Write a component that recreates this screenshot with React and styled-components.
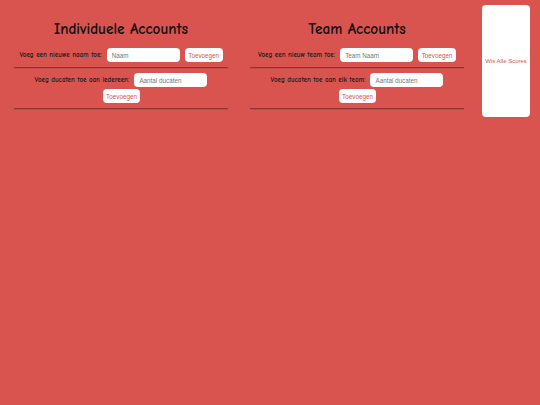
import React from "react";
import styled, { createGlobalStyle } from "styled-components";

const Global = createGlobalStyle`
  html, body { margin: 0; padding: 0; }
  body {
    background: #d9534f;
    font-family: "Comic Sans MS", "Comic Neue", "DejaVu Sans", sans-serif;
    width: 540px;
    height: 405px;
    overflow: hidden;
  }
`;

const Page = styled.div`
  display: flex;
  align-items: flex-start;
  padding: 5px 10px 0 14px;
`;

const Column = styled.section`
  width: 214px;
  display: flex;
  flex-direction: column;
  align-items: stretch;
  margin-right: ${(p) => p.$gap || 0}px;
`;

const Title = styled.h1`
  margin: 15px 0 10px;
  font-size: 15.2px;
  font-weight: bold;
  text-align: center;
  color: #111;
  line-height: 18px;
`;

const Row = styled.div`
  display: flex;
  flex-wrap: wrap;
  justify-content: center;
  align-items: center;
  column-gap: 4px;
  row-gap: 2px;
  padding: ${(p) => p.$pad};
`;

const Label = styled.label`
  font-size: 7px;
  font-weight: bold;
  color: #222;
  margin-right: 1px;
  line-height: 14px;
`;

const Input = styled.input`
  width: 73px;
  height: 14px;
  box-sizing: border-box;
  border: none;
  border-radius: 4px;
  background: #fff;
  padding: 0 5px;
  font-family: "Liberation Sans", Arial, sans-serif;
  font-size: 6.3px;
  outline: none;
  &::placeholder { color: #777; }
`;

const Button = styled.button`
  height: 14px;
  box-sizing: border-box;
  border: none;
  border-radius: 4px;
  background: #fff;
  color: #d9534f;
  font-family: "Liberation Sans", Arial, sans-serif;
  font-size: 6.3px;
  padding: 0 3.5px;
  margin-left: 1px;
  cursor: pointer;
`;

const Divider = styled.hr`
  margin: 0;
  border: none;
  border-top: 1px solid #8c3532;
  border-bottom: 1px solid #c24b47;
`;

const Side = styled.aside`
  width: 48px;
  margin-left: 18px;
`;

const SideButton = styled.button`
  width: 48px;
  height: 112px;
  border: none;
  border-radius: 4px;
  background: #fff;
  color: #d9534f;
  font-family: "Liberation Sans", Arial, sans-serif;
  font-size: 6px;
  padding: 0;
  cursor: pointer;
`;

function Section({ title, label1, ph1, label2, gap }) {
  return (
    <Column $gap={gap}>
      <Title>{title}</Title>
      <Row $pad="0 0 5px">
        <Label>{label1}</Label>
        <Input placeholder={ph1} />
        <Button>Toevoegen</Button>
      </Row>
      <Divider />
      <Row $pad="4px 0 5px">
        <Label>{label2}</Label>
        <Input placeholder="Aantal ducaten" />
        <Button>Toevoegen</Button>
      </Row>
      <Divider />
    </Column>
  );
}

export default function App() {
  return (
    <>
      <Global />
      <Page>
        <Section
          title="Individuele Accounts"
          label1="Voeg een nieuwe naam toe:"
          ph1="Naam"
          label2="Voeg ducaten toe aan iedereen:"
          gap={22}
        />
        <Section
          title="Team Accounts"
          label1="Voeg een nieuw team toe:"
          ph1="Team Naam"
          label2="Voeg ducaten toe aan elk team:"
        />
        <Side>
          <SideButton>Wis Alle Scores</SideButton>
        </Side>
      </Page>
    </>
  );
}
